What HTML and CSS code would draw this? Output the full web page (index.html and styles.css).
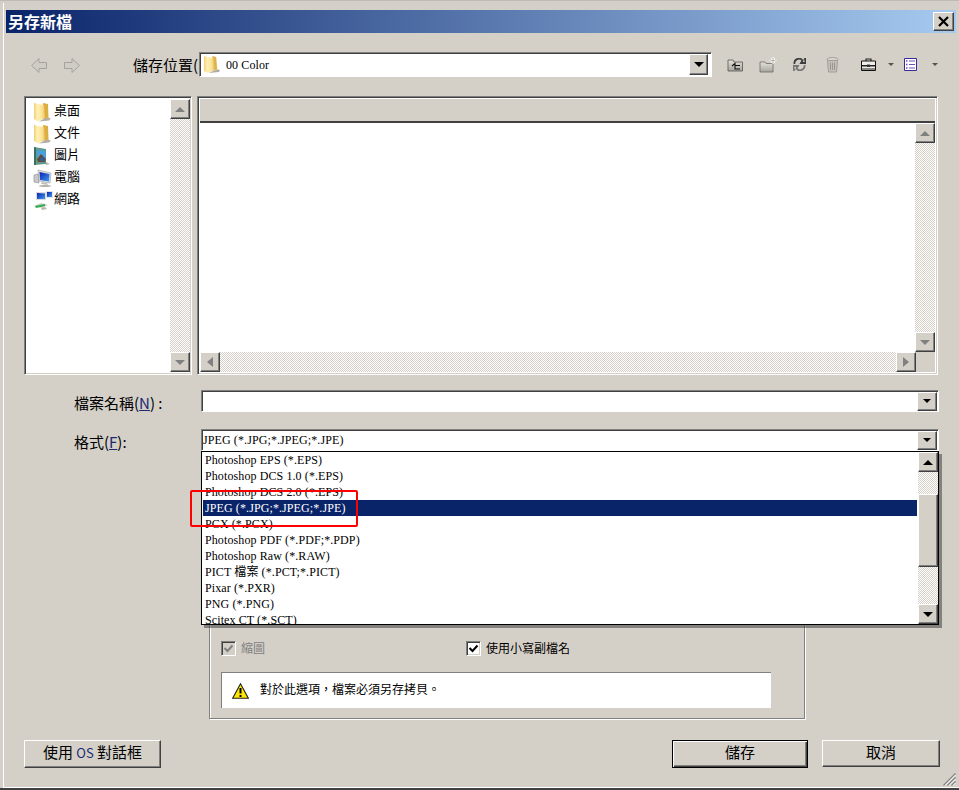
FILE: index.html
```html
<!DOCTYPE html>
<html lang="zh-Hant">
<head>
<meta charset="utf-8">
<title>另存新檔</title>
<link rel="stylesheet" href="styles.css">
</head>
<body>
<svg class="defs" width="0" height="0">
  <defs>
    <linearGradient id="fy" x1="0" y1="0" x2="1" y2="0"><stop offset="0" stop-color="#f3cf72"/><stop offset=".3" stop-color="#fff0b4"/><stop offset=".7" stop-color="#fbe49a"/><stop offset="1" stop-color="#e9c464"/></linearGradient>
    <linearGradient id="fb" x1="0" y1="0" x2="1" y2="1"><stop offset="0" stop-color="#0a1fb0"/><stop offset="1" stop-color="#3f9cf0"/></linearGradient>
    <linearGradient id="tb" x1="0" y1="0" x2="0" y2="1"><stop offset="0" stop-color="#e4e2dc"/><stop offset="1" stop-color="#a8a59c"/></linearGradient>
    <symbol id="folder" viewBox="0 0 18 20">
      <path d="M6 19.500 16 18.500 17.800 16.500 14 15z" fill="#b3afa5"/>
      <path d="M10 1 15 2 15.500 15.500 9 17z" fill="#dcae42"/>
      <path d="M1 .5 4 2 11 3 12 15.500 5 19.500 1 17z" fill="url(#fy)"/>
    </symbol>
    <symbol id="minifolder" viewBox="0 0 18 20">
      <path d="M6 19 17 18 18 16 15 15z" fill="#b0aca2"/>
      <path d="M10 1 14 2 15 15 9 17z" fill="#dfb349"/>
      <path d="M1 1 5 2 11 3 12 16 5 19 1 17z" fill="url(#fy)"/>
    </symbol>
    <symbol id="pcicon" viewBox="0 0 20 20">
      <path d="M1 7 5 6 6 15 1 14z" fill="#c9c9c9" stroke="#8c8c8c" stroke-width=".6"/>
      <path d="M5 2 18 5 17 15 6 13z" fill="#e4e4e4" stroke="#9a9a9a" stroke-width=".6"/>
      <path d="M6.500 4 16.500 6 16 13.500 7 12z" fill="url(#fb)"/>
      <path d="M9 14 14 15 15 17 8 16z" fill="#bdbdbd"/>
      <ellipse cx="12" cy="18" rx="6" ry="1" fill="#b5b1a8"/>
    </symbol>
    <symbol id="neticon" viewBox="0 0 20 20">
      <path d="M3 2 13 2 13 10 3 10z" fill="#dcdcdc"/>
      <path d="M4 3 12 3.500 12 9 4 9z" fill="url(#fb)"/>
      <path d="M13 1 20 1 20 8 13 8z" fill="#e4e4e4"/>
      <path d="M14 2 19 2 19 7 14 7z" fill="url(#fb)"/>
      <path d="M1 16 8 13 15 15 9 18z" fill="#cfcfcf"/>
      <path d="M2 16 12 14 12 16 3 18z" fill="#2fae4d"/>
      <path d="M8 18 9 20 14 19 12 17z" fill="#b9b5ab"/>
    </symbol>
    <symbol id="picicon" viewBox="0 0 18 20">
      <path d="M1 1 13 3 13 18 1 19z" fill="#5f9a8c"/>
      <path d="M1 1 3 1.500 3 19 1 19z" fill="#3a6f66"/>
      <path d="M4 4 13 5 13 13 4 13z" fill="#49a0e0"/>
      <path d="M4 13 8 8 13 13 12 16 5 16z" fill="#6d4a2c"/>
      <path d="M7 12 11 11 12 15 7 15z" fill="#2b5f96"/>
      <path d="M13 16 17 18 13 19z" fill="#b9b5ab"/>
    </symbol>
  </defs>
</svg>

<div class="frame">
  <div class="window">
    <div class="titlebar">
      <span class="title">另存新檔</span>
      <button class="btn close" aria-label="關閉"><svg width="13" height="11" viewBox="0 0 13 11"><path d="M2 1 11 10M11 1 2 10" fill="none" stroke="#000" stroke-width="2.200"/></svg></button>
    </div>

    <div class="content">
      <div class="toolbar">
        <svg class="nav back" width="16" height="15" viewBox="0 0 16 15"><path d="M.5 7.500 8 .5V4.500H15.500V10.500H8V14.500z" fill="#cfccc5" stroke="#a5a29b"/></svg>
        <svg class="nav fwd" width="16" height="15" viewBox="0 0 16 15"><path d="M15.500 7.500 8 .5V4.500H.5V10.500H8V14.500z" fill="#cfccc5" stroke="#a5a29b"/></svg>
        <span class="label loc-label">儲存位置(</span>
        <div class="combo loc">
          <svg class="loc-icon" width="17" height="19"><use href="#minifolder"/></svg>
          <span class="value">00 Color</span>
          <span class="btn drop"><i class="tri down"></i></span>
        </div>
        <svg class="tool t-up" width="17" height="14" viewBox="0 0 17 14"><path d="M1 2H6L7 4H15.500V13H1z" fill="url(#tb)" stroke="#55534e" stroke-width=".8"/><path d="M5 8 8 5.500V7.500H13M8 8V11H13" fill="none" stroke="#111" stroke-width="1.100"/></svg>
        <svg class="tool t-new" width="18" height="16" viewBox="0 0 18 16"><path d="M1 5H6L7 6.500H12L14 6 14 15H1z" fill="url(#tb)" stroke="#6d6b65" stroke-width=".8"/><path d="M14 0V7M10.500 3.500H17.500M12 1.500 16 5.500M16 1.500 12 5.500" stroke="#fff" stroke-width="1.100"/><path d="M14 1V6M11.500 3.500H16.500" stroke="#77756f" stroke-width=".5"/></svg>
        <svg class="tool t-refresh" width="13" height="13" viewBox="0 0 13 13"><path d="M1.500 6A4.500 4.500 0 0 1 9.500 2.500L8 5 12.500 5V.5L11 2" fill="none" stroke="#3d3d3d" stroke-width="1.800"/><path d="M11.500 7A4.500 4.500 0 0 1 3.500 10.500L5 8H.5V12.500L2 11" fill="none" stroke="#777" stroke-width="1.800"/></svg>
        <svg class="tool t-trash" width="13" height="16" viewBox="0 0 13 16"><ellipse cx="6.500" cy="2.500" rx="5.500" ry="2" fill="#d9d6cf" stroke="#a19e97"/><path d="M1.500 3.500 2.500 15H10.500L11.500 3.500z" fill="#c4c1ba" stroke="#a19e97"/><path d="M4.500 5.500V13M6.500 5.500V13M8.500 5.500V13" stroke="#9a978f"/></svg>
        <svg class="tool t-tools" width="15" height="13" viewBox="0 0 15 13"><path d="M5 3V1H10V3" fill="none" stroke="#222" stroke-width="1.100"/><path d="M.5 3H14.500V12.500H.5z" fill="#f0eeea" stroke="#111"/><path d="M1 7H14V8.500H1z" fill="#222"/><path d="M1 10H14V12H1z" fill="#8a8880"/><path d="M6 6.500H9V9H6z" fill="#333"/></svg>
        <i class="tri mini caret1"></i>
        <svg class="tool t-list" width="13" height="13" viewBox="0 0 13 13"><path d="M.5.5H12.500V12.500H.5z" fill="#fff" stroke="#3b2a96"/><path d="M2 3H3.500M2 6.500H3.500M2 10H3.500" stroke="#6a4fc0" stroke-width="1.400"/><path d="M5 3H11M5 6.500H11M5 10H11" stroke="#6a4fc0"/></svg>
        <i class="tri mini caret2"></i>
      </div>

      <div class="browser">
        <div class="places sunken">
          <ul class="place-list">
            <li><svg width="18" height="20"><use href="#folder"/></svg><span>桌面</span></li>
            <li><svg width="18" height="20"><use href="#folder"/></svg><span>文件</span></li>
            <li><svg width="18" height="20"><use href="#picicon"/></svg><span>圖片</span></li>
            <li><svg width="20" height="20"><use href="#pcicon"/></svg><span>電腦</span></li>
            <li><svg width="20" height="20"><use href="#neticon"/></svg><span>網路</span></li>
          </ul>
          <div class="vscroll">
            <span class="btn sb"><i class="tri up grey"></i></span>
            <span class="track"></span>
            <span class="btn sb"><i class="tri down grey"></i></span>
          </div>
        </div>
        <div class="files sunken">
          <div class="file-head"></div>
          <div class="file-main">
            <div class="file-area"></div>
            <div class="vscroll">
              <span class="btn sb"><i class="tri up grey"></i></span>
              <span class="track"></span>
              <span class="btn sb"><i class="tri down grey"></i></span>
            </div>
          </div>
          <div class="hscroll">
            <span class="btn sb"><i class="tri left grey"></i></span>
            <span class="track"></span>
            <span class="btn sb"><i class="tri right grey"></i></span>
            <span class="corner"></span>
          </div>
        </div>
      </div>

      <div class="form-row name-row">
        <label class="label form-label">檔案名稱(<u>N</u>) :</label>
        <div class="combo field"><span class="value"></span><span class="btn drop"><i class="tri down"></i></span></div>
      </div>
      <div class="form-row format-row">
        <label class="label form-label">格式(<u>F</u>):</label>
        <div class="combo field"><span class="value">JPEG (*.JPG;*.JPEG;*.JPE)</span><span class="btn drop"><i class="tri down"></i></span></div>
      </div>

      <div class="options">
        <div class="checks">
          <div class="check disabled"><span class="box"><svg width="11" height="11" viewBox="0 0 11 11"><path d="M1.500 5 4.500 8 9.500 2.500" fill="none" stroke="#808080" stroke-width="2"/></svg></span><span>縮圖</span></div>
          <div class="check lower"><span class="box"><svg width="11" height="11" viewBox="0 0 11 11"><path d="M1.500 5 4.500 8 9.500 2.500" fill="none" stroke="#000" stroke-width="2"/></svg></span><span>使用小寫副檔名</span></div>
        </div>
        <div class="notice">
          <svg width="17" height="16" viewBox="0 0 17 16"><path d="M8.500 .8 16.300 15.200H.7z" fill="#ffe600" stroke="#222" stroke-width="1.100"/><path d="M8.500 5V10.500" stroke="#000" stroke-width="2"/><path d="M7.500 12H9.500V14H7.500z"/></svg>
          <span>對於此選項，檔案必須另存拷貝。</span>
        </div>
      </div>

      <div class="footer">
        <button class="btn action os">使用 <small>OS</small> 對話框</button>
        <button class="btn action save">儲存</button>
        <button class="btn action cancel">取消</button>
      </div>
    </div>

    <div class="dropdown">
      <ul class="format-list">
        <li>Photoshop EPS (*.EPS)</li>
        <li>Photoshop DCS 1.0 (*.EPS)</li>
        <li>Photoshop DCS 2.0 (*.EPS)</li>
        <li class="selected">JPEG (*.JPG;*.JPEG;*.JPE)</li>
        <li>PCX (*.PCX)</li>
        <li>Photoshop PDF (*.PDF;*.PDP)</li>
        <li>Photoshop Raw (*.RAW)</li>
        <li>PICT 檔案 (*.PCT;*.PICT)</li>
        <li>Pixar (*.PXR)</li>
        <li>PNG (*.PNG)</li>
        <li class="clipped">Scitex CT (*.SCT)</li>
      </ul>
      <div class="vscroll list-scroll">
        <span class="btn sb"><i class="tri up"></i></span>
        <span class="track short"></span>
        <span class="btn thumb"></span>
        <span class="track"></span>
        <span class="btn sb"><i class="tri down"></i></span>
      </div>
    </div>

    <div class="callout"></div>

    <svg class="grip" width="13" height="13" viewBox="0 0 13 13"><path d="M12.500 .5 .5 12.500M12.500 4.500 4.500 12.500M12.500 8.500 8.500 12.500" stroke="#808080" stroke-width="1.400"/><path d="M12.500 2 2 12.500M12.500 6 6 12.500M12.500 10 10 12.500" stroke="#fff"/></svg>
  </div>
</div>
</body>
</html>
```

FILE: styles.css
```css
* { box-sizing: border-box; }
html, body { margin: 0; padding: 0; }
body {
  width: 959px;
  height: 790px;
  overflow: hidden;
  background: #d4d0c8;
  font-family: "Liberation Serif", "Noto Sans CJK TC", serif;
  color: #000;
}
.defs { position: absolute; }
ul { list-style: none; margin: 0; padding: 0; }
svg { display: block; flex: none; }

.frame {
  height: 790px;
  padding: 2px 0 0 3px;
  border-top: 1px solid #bdbbb6;
  border-bottom: 2px solid #404040;
  background: #d4d0c8;
}
.window {
  position: relative;
  height: 785px;
  padding: 7px 3px 0 2px;
  border-left: 1px solid #fff;
  border-bottom: 1px solid #fff;
}

.btn {
  display: flex;
  align-items: center;
  justify-content: center;
  padding: 0;
  background: #d4d0c8;
  border: 1px solid;
  border-color: #fff #404040 #404040 #fff;
  box-shadow: inset -1px -1px 0 #808080;
}

.titlebar {
  display: flex;
  align-items: center;
  justify-content: space-between;
  height: 23px;
  padding: 0 2px 0 2px;
  background: linear-gradient(90deg, #0a246a, #a6caf0);
}
.title {
  color: #fff;
  font: bold 16px/23px "Noto Sans CJK TC", sans-serif;
}
.close { width: 21px; height: 19px; }

.content { padding-left: 18px; }

.label { font: 15px/20px "Noto Sans CJK TC", sans-serif; white-space: nowrap; }

.toolbar {
  display: flex;
  align-items: center;
  height: 25px;
  margin-top: 19px;
}
.nav { margin-top: 2px; }
.back { margin-left: 7px; }
.fwd { margin-left: 17px; }
.loc-label { width: 66px; margin-left: 53px; overflow: hidden; }
.combo {
  display: flex;
  align-items: center;
  background: #fff;
  border: 1px solid;
  border-color: #808080 #fff #fff #808080;
  box-shadow: inset 1px 1px #404040;
}
.loc { width: 513px; height: 25px; padding-right: 3px; }
.loc-icon { margin: 0 6px 0 3px; }
.value { flex: 1; font-size: 12px; line-height: 16px; letter-spacing: .1px; white-space: nowrap; }
.field .value { margin-left: -1px; }
.drop { width: 19px; height: 21px; }
.t-up { margin-left: 15px; }
.t-new { margin-left: 15px; }
.t-refresh { margin-left: 16px; }
.t-trash { margin-left: 20px; }
.t-tools { margin-left: 22px; }
.caret1 { margin-left: 12px; }
.t-list { margin-left: 10px; }
.caret2 { margin-left: 15px; }

.tri { display: block; width: 0; height: 0; border-style: solid; border-color: transparent; }
.tri.down { border-width: 5px 5px 0; border-top-color: #000; }
.tri.up { border-width: 0 5px 5px; border-bottom-color: #000; }
.tri.left { border-width: 5px 6px 5px 0; border-right-color: #808080; }
.tri.right { border-width: 5px 0 5px 6px; border-left-color: #808080; }
.tri.grey.down { border-top-color: #808080; }
.tri.grey.up { border-bottom-color: #808080; }
.tri.mini { border-width: 3px 3px 0; border-top-color: #55534e; }
.field .tri.down { border-width: 4px 4px 0; }

.sunken {
  background: #fff;
  border: 1px solid;
  border-color: #808080 #fff #fff #808080;
  box-shadow: inset 1px 1px #404040, inset -1px -1px #d4d0c8;
}
.browser { display: flex; gap: 5px; height: 279px; margin-top: 19px; }
.places { display: flex; width: 168px; padding: 2px 1px 2px 2px; }
.place-list { flex: 1; padding: 2px 0 0 6px; }
.place-list li {
  position: relative;
  display: flex;
  align-items: center;
  height: 22px;
  font: 13px/22px "Noto Sans CJK TC", sans-serif;
}
.place-list span { position: absolute; left: 21px; top: -2px; }

.vscroll { display: flex; flex-direction: column; width: 20px; }
.track {
  display: block;
  flex: 1;
  background: conic-gradient(#fff 25%, #d4d0c8 0 50%, #fff 0 75%, #d4d0c8 0) 0 0 / 2px 2px;
}
.sb { width: 20px; height: 20px; flex: none; }

.files { display: flex; flex-direction: column; width: 741px; padding: 2px; }
.file-head { height: 24px; flex: none; background: #d4d0c8; border-bottom: 2px solid #404040; }
.file-main { display: flex; flex: 1; min-height: 0; }
.file-area { flex: 1; background: #fff; }
.hscroll { display: flex; height: 20px; flex: none; }
.hscroll .track { height: 20px; }
.corner { width: 19px; background: #d4d0c8; }

.form-row { display: flex; align-items: center; height: 22px; }
.name-row { margin-top: 15px; }
.format-row { margin-top: 17px; }
.form-label { width: 177px; padding: 3px 0 0 50px; }
.form-label u { color: #1b2a70; }
.field { width: 738px; height: 22px; padding: 0 1px 0 2px; }
.field .drop { width: 20px; height: 19px; }

.options {
  width: 596px;
  height: 119px;
  margin: 149px 0 0 185px;
  padding: 39px 11px 0 11px;
  border: 1px solid #808080;
  box-shadow: 1px 1px 0 #fff, inset 1px 1px 0 #fff;
}
.checks { display: flex; }
.check {
  display: flex;
  align-items: center;
  gap: 5px;
  height: 16px;
  font: 12px/16px "Noto Sans CJK TC", sans-serif;
}
.box {
  display: flex;
  align-items: center;
  justify-content: center;
  width: 15px;
  height: 15px;
  background: #fff;
  border: 1px solid;
  border-color: #808080 #fff #fff #808080;
  box-shadow: inset 1px 1px #404040, inset -1px -1px #d4d0c8;
}
.disabled { color: #808080; width: 245px; }
.disabled .box { background: #d4d0c8; }
.notice {
  display: flex;
  align-items: center;
  gap: 11px;
  width: 550px;
  height: 36px;
  margin-top: 16px;
  padding-left: 10px;
  background: #fff;
  border-top: 1px solid #808080;
  border-left: 1px solid #808080;
  font: 12px/16px "Noto Sans CJK TC", sans-serif;
}
.notice span { margin-top: -3px; }

.footer { display: flex; margin-top: 21px; }
.action {
  display: block;
  height: 28px;
  padding-bottom: 4px;
  font: 15px/20px "Noto Sans CJK TC", sans-serif;
  color: #000;
}
.action small { font-size: 13px; color: #1b2a70; }
.os { width: 137px; }
.save {
  width: 136px;
  margin-left: 511px;
  border-color: #000;
  box-shadow: inset 1px 1px #fff, inset -1px -1px #404040, inset -2px -2px #808080;
}
.cancel { width: 118px; height: 27px; margin-left: 14px; }

.dropdown {
  position: absolute;
  left: 197px;
  top: 448px;
  display: flex;
  width: 738px;
  height: 174px;
  padding: 0 0 0 1px;
  background: #fff;
  border: 1px solid #000;
  box-shadow: 3px 3px 0 rgba(64, 64, 64, .55);
}
.format-list { flex: 1; min-width: 0; height: 172px; margin-right: 1px; overflow: hidden; }
.format-list li {
  height: 16px;
  padding-left: 2px;
  font-size: 12px;
  line-height: 16px;
  letter-spacing: .1px;
  white-space: nowrap;
}
.format-list .selected { color: #fff; background: #0a246a; }
.format-list .clipped { height: 12px; overflow: hidden; }
.list-scroll .track { flex: 1 1 0; }
.list-scroll .short { flex: 0 0 22px; }
.list-scroll .thumb { flex: none; height: 73px; width: 20px; }

.callout {
  position: absolute;
  left: 186px;
  top: 487px;
  width: 168px;
  height: 37px;
  border: 2px solid #f00;
  border-radius: 2px;
}
.grip { position: absolute; right: 3px; bottom: 1px; }
```
